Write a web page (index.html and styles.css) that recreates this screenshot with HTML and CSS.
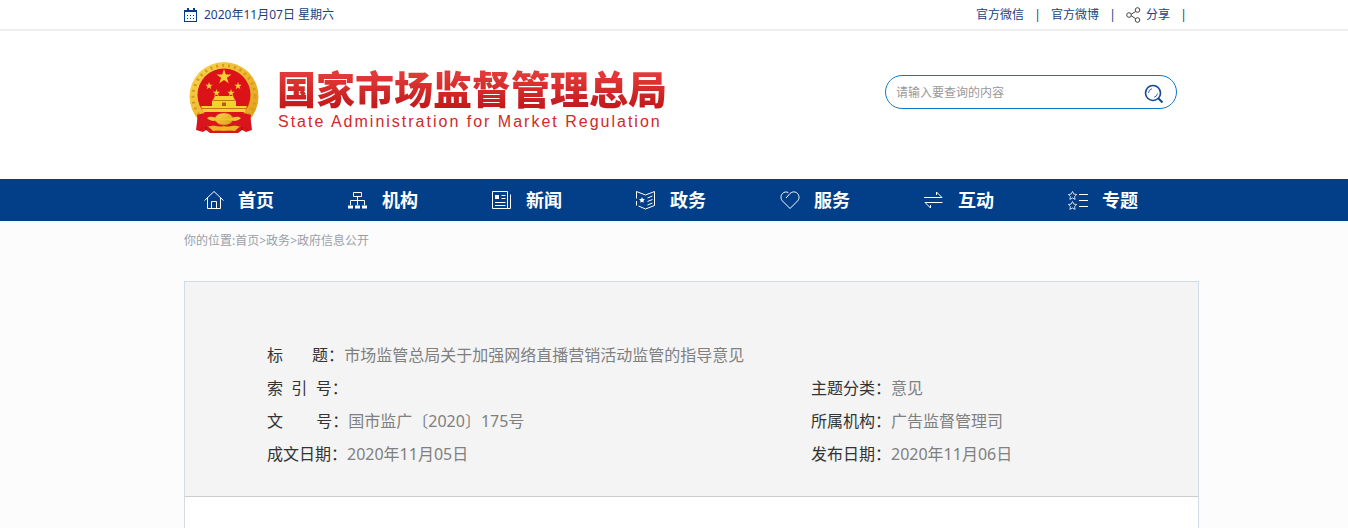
FILE: index.html
```
<!DOCTYPE html>
<html lang="zh-CN">
<head>
    <meta charset="UTF-8">
    <meta name="viewport" content="width=device-width, initial-scale=1.0">
    <title>国家市场监督管理总局</title>
    <link rel="stylesheet" href="styles.css">
</head>
<body>
    <div class="topbar">
        <div class="wrap topbar-inner">
            <div class="date">
                <svg width="13" height="14" viewBox="0 0 13 14" fill="none" stroke="#023f88" shape-rendering="crispEdges">
                    <path d="M.5 2.500h12v11H.5zM0 3.500h13"/>
                    <path d="M3.500 0v4M9.500 0v4" stroke-width="2"/>
                    <path d="M3 7.500h1m2 0h1m2 0h1M3 10.500h1m2 0h1m2 0h1"/>
                </svg>
                <span>2020年11月07日 星期六</span>
            </div>
            <div class="top-links">
                <a href="#">官方微信</a>
                <span class="bar">|</span>
                <a href="#">官方微博</a>
                <span class="bar">|</span>
                <a href="#" class="share">
                    <svg width="15" height="16" viewBox="0 0 15 16" fill="none" stroke="#444">
                        <circle cx="3" cy="8" r="2.300"/>
                        <circle cx="11.500" cy="3" r="2.300"/>
                        <circle cx="11.500" cy="13" r="2.300"/>
                        <path d="M5.200 7.200l4.500-2.700M5.200 8.800l4.500 2.800"/>
                    </svg>
                    <span>分享</span>
                </a>
                <span class="bar">|</span>
            </div>
        </div>
    </div>

    <div class="header">
        <div class="wrap header-inner">
            <a href="#" class="logo">
                <svg class="emblem" width="72" height="74" viewBox="0 0 72 74">
                    <defs>
                        <linearGradient id="gold" x1="0" y1="0" x2="1" y2="1">
                            <stop offset="0" stop-color="#f9d84e"/>
                            <stop offset="1" stop-color="#e09a14"/>
                        </linearGradient>
                    </defs>
                    <path d="M10 53L8 69l7 2 3-2 4 3h28l4-3 4 2 6-2-2-16z" fill="#d9141c"/>
                    <path d="M14 58l-2 11M19 60l-1 9M58 58l2 11M53 60l1 9" stroke="#9d0c12"/>
                    <circle cx="36" cy="35.500" r="34.500" fill="url(#gold)"/>
                    <circle cx="36" cy="35.500" r="31" fill="none" stroke="#d9981c" stroke-width="3" stroke-dasharray="2 4"/>
                    <circle cx="36" cy="34" r="26.500" fill="#dc1219"/>
                    <g fill="#f8d02f">
                        <path id="star" d="M36 8l1.800 5.400h5.700l-4.600 3.400 1.800 5.500-4.700-3.400-4.700 3.400 1.800-5.500-4.600-3.400h5.700z"/>
                        <use href="#star" transform="translate(3 17) scale(.5)"/>
                        <use href="#star" transform="translate(32 17) scale(.5)"/>
                        <use href="#star" transform="translate(10.500 24) scale(.5)"/>
                        <use href="#star" transform="translate(25 24) scale(.5)"/>
                        <path d="M27 35h18l2 4H25zM24 39h24v6H24zM13 45h46l-2 6H15z"/>
                    </g>
                    <path d="M24 39.500h24M13 47.500h46" stroke="#c4780e"/>
                    <path d="M34 45v-3.500h4V45z" fill="#b5610c"/>
                    <path d="M9 54c10-4 14 0 27 1 13-1 17-5 27-1l-2 15c-8-6-17-3-25-3s-17-3-25 3z" fill="#d9141c"/>
                    <ellipse cx="36" cy="58" rx="9" ry="6" fill="url(#gold)" stroke="#c98512" stroke-dasharray="2 2"/>
                    <path d="M19 57c4-3 9 0 13 1h8c4-1 9-4 13-1-4 4-8 3-12 2H31c-4 1-8 2-12-2z" fill="#f3c236"/>
                    <path d="M21 66c5-3 9 1 15-1 6 2 10-2 15 1l-4 4c-6-1-16-1-22 0z" fill="#efb526"/>
                </svg>
                <span class="logo-text">
                    <span class="logo-cn">国家市场监督管理总局</span>
                    <span class="logo-en">State Administration for Market Regulation</span>
                </span>
            </a>
            <form class="search" action="#">
                <input type="text" class="search-input" placeholder="请输入要查询的内容" aria-label="请输入要查询的内容">
                <button type="submit" class="search-btn" aria-label="搜索">
                    <svg width="20" height="20" viewBox="0 0 20 20" fill="none" stroke="#10479a">
                        <circle cx="9" cy="9" r="7.500" stroke-width="1.600"/>
                        <path d="M14.500 14.500l4 4" stroke-width="2"/>
                        <path d="M4.500 9A4.500 4.500 0 0 1 8 4.700M13.500 9.500A4.500 4.500 0 0 1 10 13.300" stroke-width=".8"/>
                    </svg>
                </button>
            </form>
        </div>
    </div>

    <nav class="nav">
        <div class="wrap nav-inner">
            <a href="#">
                <svg width="20" height="20" viewBox="0 0 20 20"><path d="M.5 10.500L10 1.500l9.500 9M3.500 8v10.500h13V8M7.500 18v-6.500h5V18"/></svg>
                <span>首页</span>
            </a>
            <a href="#">
                <svg width="20" height="20" viewBox="0 0 20 20"><path d="M5.500 2.500h8v4h-8zM9.500 7v8M2.500 15v-4.500h14V15"/><path d="M0 17h5M7 17h5M14 17h5" stroke-width="3"/></svg>
                <span>机构</span>
            </a>
            <a href="#">
                <svg width="20" height="20" viewBox="0 0 20 20"><path d="M.5 1.500h15v17H.5zM15.500 18.500h3v-14M9.500 5.500h4M9.500 8.500h4M3 12.500h10.500M3 15.500h10.500"/><path d="M3 5h4v4H3z" fill="#fff" stroke="none"/></svg>
                <span>新闻</span>
            </a>
            <a href="#">
                <svg width="20" height="20" viewBox="0 0 20 20"><path d="M.5 8.500v-7L9.500 5l9-3.500v14L9.500 19l-7-3M.5 11v4.500M11.500 8l5-2M11.500 11.500l5-2M11.500 15l5-2"/><path d="M6 7l.9 2 2.100.2-1.600 1.500.4 2.100L6 11.700l-1.800 1.100.4-2.100L3 9.200 5.100 9z" fill="#fff" stroke="none"/></svg>
                <span>政务</span>
            </a>
            <a href="#">
                <svg width="20" height="20" viewBox="0 0 20 20"><path d="M6 8l4-4.500c2-2 5.500-2.200 7.500 0s2 5.500 0 7.500L10 18.500 2.500 11c-2-2-2-5.300 0-7.500 1.600-1.700 4-2 5.800-.9"/></svg>
                <span>服务</span>
            </a>
            <a href="#">
                <svg width="20" height="20" viewBox="0 0 20 20"><path d="M0 7.500h18L12.500 2v3M18.500 12.500H1L6.500 18v-3"/></svg>
                <span>互动</span>
            </a>
            <a href="#">
                <svg width="20" height="20" viewBox="0 0 20 20"><path d="M11 4.500h9M11 10.500h9M11 16.500h9"/><path id="s" d="M4.500 1.500l1.300 2.600 2.900.4-2.100 2 .5 2.900-2.600-1.400-2.600 1.400.5-2.900-2.100-2 2.900-.4z" stroke-width=".8"/><use href="#s" y="10"/></svg>
                <span>专题</span>
            </a>
        </div>
    </nav>

    <div class="wrap main">
        <div class="crumbs">你的位置:<a href="#">首页</a>&gt;<a href="#">政务</a>&gt;<a href="#">政府信息公开</a></div>

        <div class="article">
            <dl class="info">
                <div class="row full"><dt>标&nbsp;&nbsp;&nbsp;&nbsp;&nbsp;&nbsp;&nbsp;题：</dt><dd>市场监管总局关于加强网络直播营销活动监管的指导意见</dd></div>
                <div class="row"><dt>索&nbsp;&nbsp;引&nbsp;&nbsp;号：</dt><dd></dd></div>
                <div class="row"><dt>主题分类：</dt><dd>意见</dd></div>
                <div class="row"><dt>文&nbsp;&nbsp;&nbsp;&nbsp;&nbsp;&nbsp;&nbsp;&nbsp;号：</dt><dd>国市监广〔2020〕175号</dd></div>
                <div class="row"><dt>所属机构：</dt><dd>广告监督管理司</dd></div>
                <div class="row"><dt>成文日期：</dt><dd>2020年11月05日</dd></div>
                <div class="row"><dt>发布日期：</dt><dd>2020年11月06日</dd></div>
            </dl>
            <div class="article-body"></div>
        </div>
    </div>
</body>
</html>
```

FILE: styles.css
```
* {
    box-sizing: border-box;
}

body {
    margin: 0;
    min-height: 100vh;
    display: flex;
    flex-direction: column;
    background: #fcfcfc;
    font-family: "Noto Sans", "Noto Sans CJK SC", sans-serif;
    font-size: 12px;
    color: #333;
}

a {
    color: inherit;
    text-decoration: none;
}

svg {
    display: block;
    flex: none;
}

.wrap {
    width: 100%;
    max-width: 1015px;
    margin-left: max(0px, calc(50% - 490px));
}

.topbar {
    background: #fff;
    border-bottom: 2px solid #eee;
    color: #1b3f82;
    line-height: 29px;
}

.topbar-inner {
    display: flex;
    justify-content: space-between;
    padding-right: 12px;
}

.date {
    display: flex;
    align-items: center;
    gap: 7px;
}

.top-links {
    display: flex;
    align-items: center;
    gap: 10px;
}

.bar {
    width: 7px;
    text-align: center;
}

.share {
    display: flex;
    align-items: center;
    gap: 5px;
}

.header {
    background: #fff;
}

.header-inner {
    display: flex;
    justify-content: space-between;
    align-items: flex-start;
    padding: 30px 22px 44px 4px;
}

.logo {
    display: flex;
    gap: 17px;
}

.logo-text {
    display: flex;
    flex-direction: column;
    padding-top: 4px;
}

.logo-cn {
    font-size: 39px;
    font-weight: 900;
    line-height: 48px;
    background: linear-gradient(#e23a38 20%, #c41a1c 85%);
    -webkit-background-clip: text;
    background-clip: text;
    color: transparent;
}

.logo-en {
    padding-left: 1px;
    font-family: "Liberation Sans", Arial, sans-serif;
    font-size: 16px;
    line-height: 18px;
    letter-spacing: 2px;
    color: #cf2a27;
}

.search {
    display: flex;
    align-items: center;
    width: 292px;
    height: 34px;
    margin-top: 14px;
    padding: 0 12px 0 10px;
    border: 1px solid #0b78c8;
    border-radius: 17px;
}

.search-input {
    flex: 1;
    min-width: 0;
    padding: 0;
    border: 0;
    outline: none;
    background: none;
    font: inherit;
}

.search-input::placeholder {
    color: #999;
}

.search-btn {
    padding: 4px 0 0;
    border: 0;
    background: none;
    cursor: pointer;
}

.nav {
    background: #023f88;
}

.nav-inner {
    display: flex;
}

.nav-inner a {
    display: flex;
    align-items: center;
    gap: 14px;
    width: 144px;
    padding-left: 20px;
    color: #fff;
    font-size: 18px;
    font-weight: bold;
    line-height: 42px;
}

.nav-inner svg {
    fill: none;
    stroke: #fff;
}

.crumbs {
    padding: 10px 0 30px;
    line-height: 20px;
    color: #9a9fa9;
}

.main {
    flex: 1;
    display: flex;
    flex-direction: column;
}

.article {
    flex: 1;
    display: flex;
    flex-direction: column;
    border: 1px solid #d0dbe8;
    border-bottom: 0;
    background: #fff;
}

.info {
    display: grid;
    grid-template-columns: 544px 1fr;
    margin: 0;
    padding: 57px 0 25px 82px;
    border-bottom: 1px solid #ccc;
    background: #f4f4f4;
    font-size: 16px;
    line-height: 33px;
}

.full {
    grid-column: 1 / -1;
}

.row {
    display: flex;
}

.info dd {
    margin: 0;
    color: #808080;
}

.article-body {
    flex: 1;
}
```
